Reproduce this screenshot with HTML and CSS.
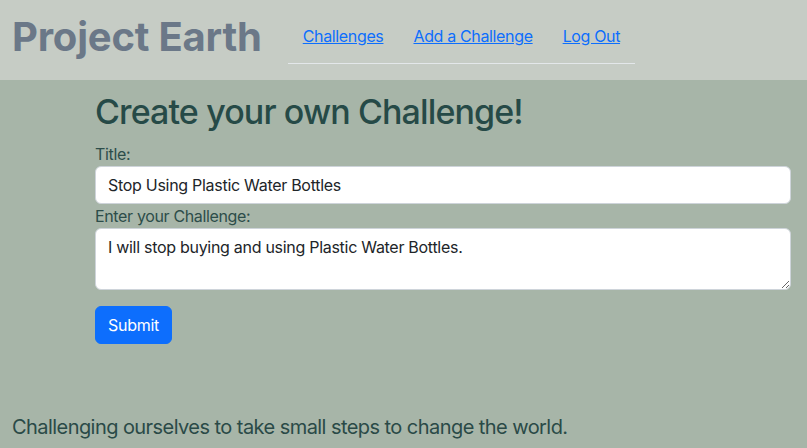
FILE: index.html
```html
<!DOCTYPE html>
<html lang="en">
<head>
<meta charset="utf-8">
<title>Project Earth</title>
<link rel="stylesheet" href="styles.css">
</head>
<body>
<header class="site-header">
  <div class="brand">Project Earth</div>
  <nav class="nav">
    <a class="nav-link" href="#">Challenges</a>
    <a class="nav-link" href="#">Add a Challenge</a>
    <a class="nav-link" href="#">Log Out</a>
  </nav>
</header>
<main class="content">
  <h1 class="page-title">Create your own Challenge!</h1>
  <form class="form">
    <label class="form-label" for="title">Title:</label>
    <input class="form-control" id="title" type="text" value="Stop Using Plastic Water Bottles">
    <label class="form-label" for="desc">Enter your Challenge:</label>
    <textarea class="form-control textarea" id="desc">I will stop buying and using Plastic Water Bottles.</textarea>
    <div class="actions"><button class="btn" type="button">Submit</button></div>
  </form>
</main>
<footer class="site-footer">Challenging ourselves to take small steps to change the world.</footer>
</body>
</html>
```

FILE: styles.css
```css
* { box-sizing: border-box; }
html, body { margin: 0; padding: 0; }
body {
  font-family: Inter, "Noto Sans", sans-serif;
  font-size: 16px;
  line-height: 1.5;
  letter-spacing: -0.022em;
  background: #a7b5a8;
  color: #2a4a47;
  width: 807px;
  height: 448px;
  overflow: hidden;
}
.site-header {
  height: 80px;
  background: #c6ccc5;
  display: flex;
  align-items: flex-start;
  padding: 0 12px;
}
.brand {
  font-size: 40px;
  font-weight: 700;
  color: #6b7888;
  line-height: 48px;
  margin-top: 13px;
  letter-spacing: -0.2px;
}
.nav {
  display: flex;
  margin-left: 26px;
  margin-top: 24px;
  padding-bottom: 15px;
  border-bottom: 1px solid #e3e7ea;
}
.nav-link {
  color: #0d6efd;
  text-decoration: underline;
  padding: 0 15px;
  font-size: 16px;
  line-height: 24px;
}
.content {
  margin-left: 95px;
  width: 696px;
}
.page-title {
  font-size: 34px;
  font-weight: 500;
  line-height: 1.2;
  letter-spacing: -0.026em;
  margin: 12px 0 9px;
  color: #264a47;
}
.form { display: flex; flex-direction: column; }
.form-label { display: block; line-height: 24px; color: #2d4d4a; }
.form-control {
  display: block;
  width: 100%;
  font-family: inherit;
  font-size: 16px;
  line-height: 24px;
  letter-spacing: -0.018em;
  color: #212529;
  background: #fff;
  border: 1px solid #ced4da;
  border-radius: 6px;
  padding: 6px 12px;
  margin: 0;
}
.textarea { height: 62px; resize: vertical; margin-bottom: 16px; }
.btn {
  font-family: inherit;
  font-size: 16px;
  line-height: 24px;
  letter-spacing: -0.018em;
  padding: 6px 12px;
  color: #fff;
  background: #0d6efd;
  border: 1px solid #0d6efd;
  border-radius: 6px;
}
.site-footer {
  margin-top: 71px;
  padding-left: 12px;
  font-size: 20px;
  line-height: 24px;
  letter-spacing: -0.028em;
  color: #2a4a47;
}
```
